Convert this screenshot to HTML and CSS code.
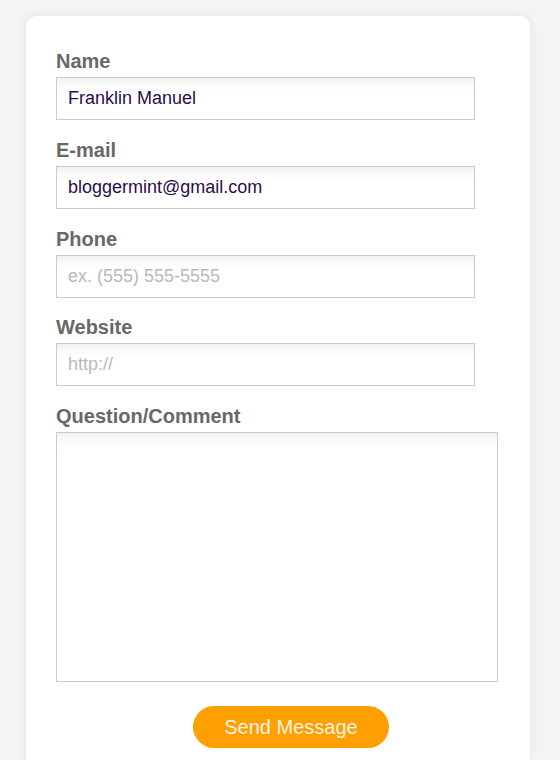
FILE: index.html
```html
<!DOCTYPE html>
<html lang="en">
<head>
<meta charset="utf-8">
<title>Contact Form</title>
<link rel="stylesheet" href="styles.css">
</head>
<body>
<div class="card">
  <form class="form">
    <label class="label" for="name">Name</label>
    <input class="field" id="name" type="text" value="Franklin Manuel">
    <label class="label" for="email">E-mail</label>
    <input class="field" id="email" type="text" value="bloggermint@gmail.com">
    <label class="label" for="phone">Phone</label>
    <input class="field" id="phone" type="text" placeholder="ex. (555) 555-5555">
    <label class="label" for="site">Website</label>
    <input class="field" id="site" type="text" placeholder="http://">
    <label class="label" for="comment">Question/Comment</label>
    <textarea class="area" id="comment"></textarea>
    <div class="actions">
      <button class="send" type="button">Send Message</button>
    </div>
  </form>
</div>
</body>
</html>
```
FILE: styles.css
```css
html, body {
  margin: 0;
  padding: 0;
  background: #f4f4f4;
  font-family: "Liberation Sans", Arial, sans-serif;
}
body {
  height: 760px;
  overflow: hidden;
}
.card {
  margin: 16px 0 0 26px;
  width: 504px;
  height: 744px;
  background: #fff;
  border-radius: 11px 11px 0 0;
  box-shadow: 0 0 10px rgba(0, 0, 0, 0.08);
  box-sizing: border-box;
  padding: 33px 0 0 30px;
}
.form {
  display: flex;
  flex-direction: column;
  align-items: flex-start;
}
.label {
  font-size: 20px;
  line-height: 24px;
  font-weight: bold;
  color: #686868;
  margin-bottom: 4px;
}
.field {
  box-sizing: border-box;
  width: 419px;
  height: 43px;
  margin: 0 0 17.75px 0;
  padding: 0 11px;
  border: 1px solid #cbcbcb;
  border-radius: 0;
  background: #fff;
  box-shadow: inset 0 12px 12px -8px rgba(0, 0, 0, 0.07);
  font-family: "Liberation Sans", Arial, sans-serif;
  font-size: 18px;
  color: #2c0c4c;
  outline: none;
}
.field::placeholder {
  color: #bcb6c0;
  opacity: 1;
}
.area {
  box-sizing: border-box;
  width: 442px;
  height: 250px;
  margin: 0;
  padding: 8px 11px;
  border: 1px solid #cbcbcb;
  border-radius: 0;
  background: #fff;
  box-shadow: inset 0 14px 14px -10px rgba(0, 0, 0, 0.07);
  resize: none;
  font-family: "Liberation Sans", Arial, sans-serif;
  font-size: 18px;
  outline: none;
}
.actions {
  padding: 24px 0 0 137px;
}
.send {
  width: 196px;
  height: 42px;
  border: none;
  border-radius: 21px;
  background: #ff9f00;
  color: #fff4e0;
  font-family: "Liberation Sans", Arial, sans-serif;
  font-size: 20px;
  padding: 0;
  cursor: pointer;
}
```
